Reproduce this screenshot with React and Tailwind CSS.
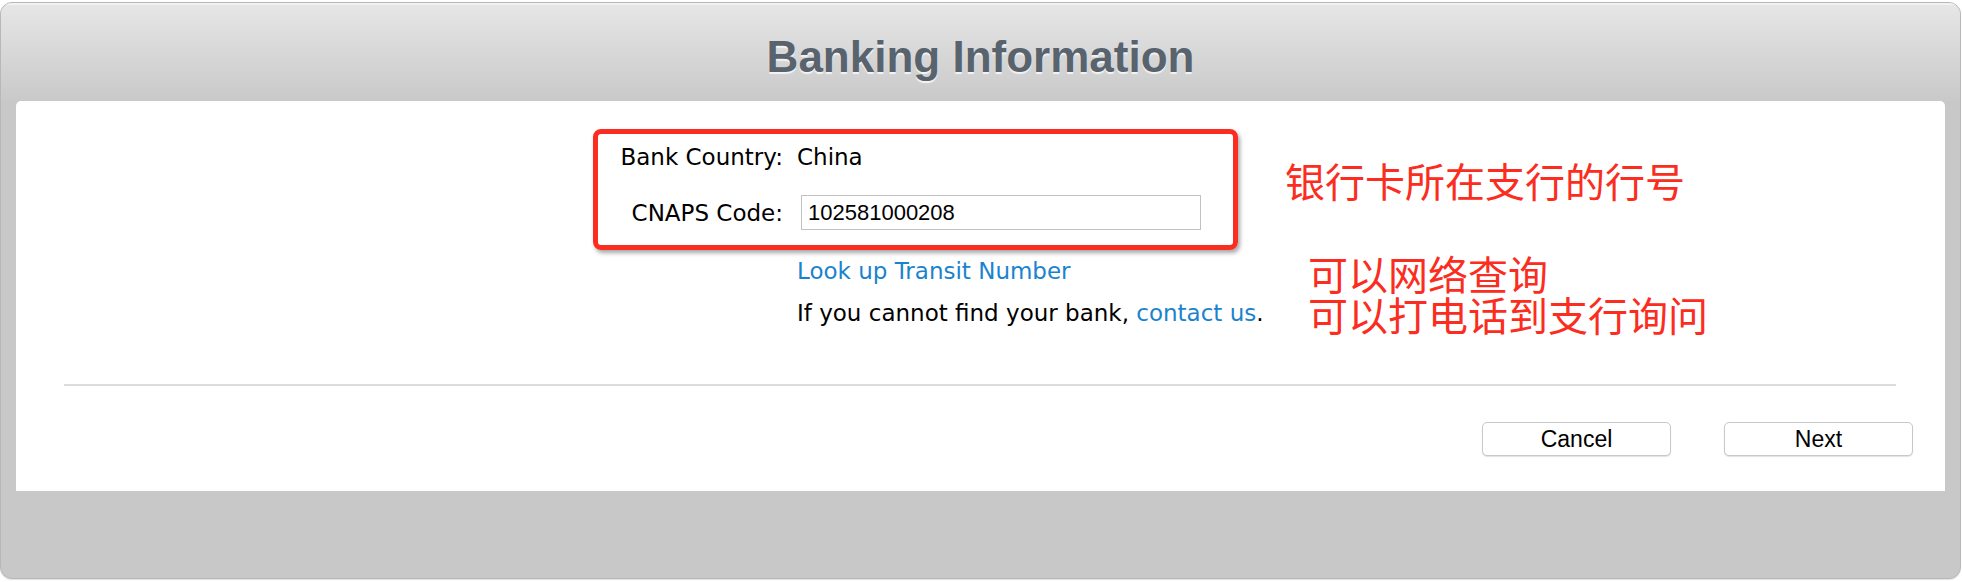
export default function App() {
  return (
    <div className="w-[1962px] h-[582px] bg-white pt-[2px] font-['Liberation_Sans',Arial,sans-serif]">
      <div className="flex h-[577px] w-[1961px] flex-col overflow-hidden rounded-[12px] border border-[#b8b8b8] bg-[#c8c8c8] shadow-[0_1px_1px_rgba(0,0,0,0.12)]">
        {/* header */}
        <div className="h-[98px] shrink-0 border-t-2 border-[#f2f2f2] bg-gradient-to-b from-[#e6e6e6] to-[#c9c9c9] pt-[30px] text-center">
          <h1 className="text-[44px] font-bold leading-none text-[#58636d] [text-shadow:0_2px_1px_#f4f4f4]">
            Banking Information
          </h1>
        </div>

        {/* white panel */}
        <div className="mx-[15px] h-[390px] shrink-0 rounded-t-[5px] bg-white pt-[28px]">
          <div className="flex h-[255px] pl-[577px]">
            <div className="w-[645px] shrink-0">
              <div className="h-[121px] rounded-[8px] border-[5px] border-[#fb2c20] pt-[10px] shadow-[2px_3px_4px_rgba(0,0,0,0.35)] font-['DejaVu_Sans',sans-serif] text-[23px] text-black">
                <div className="flex h-[26px] items-center leading-[26px]">
                  <span className="w-[185px] text-right">Bank Country:</span>
                  <span className="ml-[14px]">China</span>
                </div>
                <div className="mt-[25px] flex items-center">
                  <span className="w-[185px] text-right leading-[26px]">CNAPS Code:</span>
                  <input
                    readOnly
                    value="102581000208"
                    className="ml-[18px] h-[35px] w-[400px] border border-[#c2c2c2] px-[6px] font-['Liberation_Sans',Arial,sans-serif] text-[22px] text-black outline-none"
                  />
                </div>
              </div>
              <div className="whitespace-nowrap pl-[204px] font-['DejaVu_Sans',sans-serif] text-[23px] leading-[42px] text-black">
                <a className="block text-[#1a83cd]">Look up Transit Number</a>
                <p>
                  If you cannot find your bank, <a className="text-[#1a83cd]">contact us</a>.
                </p>
              </div>
            </div>

            <div className="ml-[47px] pt-[31px] font-['Noto_Sans_CJK_SC',sans-serif] text-[40px] leading-[41px] text-[#fb2c20]">
              <p className="leading-[40px]">银行卡所在支行的行号</p>
              <div className="mt-[53px] pl-[23px]">
                <p>可以网络查询</p>
                <p>可以打电话到支行询问</p>
              </div>
            </div>
          </div>

          <div className="ml-[48px] mr-[49px] h-[2px] bg-[#dcdcdc]" />

          <div className="mt-[36px] flex justify-end gap-[53px] pr-[32px]">
            <button className="h-[34px] w-[189px] rounded-[5px] border border-[#c8c8c8] bg-white text-[23px] leading-none text-black shadow-[0_1px_1px_rgba(0,0,0,0.12)]">
              Cancel
            </button>
            <button className="h-[34px] w-[189px] rounded-[5px] border border-[#c8c8c8] bg-white text-[23px] leading-none text-black shadow-[0_1px_1px_rgba(0,0,0,0.12)]">
              Next
            </button>
          </div>
        </div>
      </div>
    </div>
  );
}
